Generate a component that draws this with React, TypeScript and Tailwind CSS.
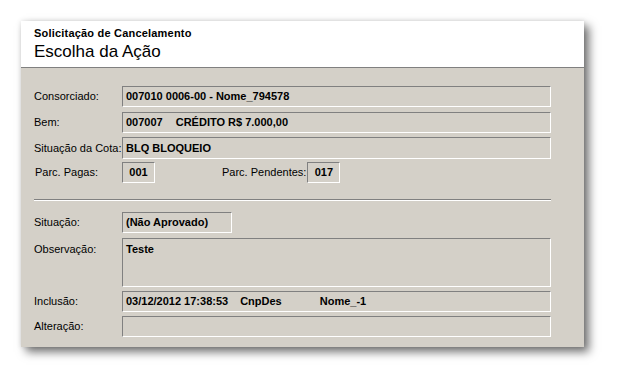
import React from "react";

const font = { fontFamily: "'Liberation Sans', Arial, sans-serif" };

function Field({ children, className = "" }: { children?: React.ReactNode; className?: string }) {
    return (
        <div className={`border-t border-l border-t-[#808080] border-l-[#808080] border-b border-r border-b-white border-r-white bg-[#d4d0c8] px-[3px] text-[11px] font-bold text-black whitespace-nowrap flex items-center ${className}`}>
            {children}
        </div>
    );
}

function Row({ label, children, className = "" }: { label: string; children: React.ReactNode; className?: string }) {
    return (
        <div className={`flex items-center ${className}`}>
            <span className="w-[88px] shrink-0 whitespace-nowrap text-[11px] text-black">{label}</span>
            {children}
        </div>
    );
}

export default function App() {
    return (
        <div className="min-h-[389px] bg-white pt-[21px] pl-[21px]" style={font}>
            <div className="w-[563px] h-[326px] flex flex-col shadow-[5px_5px_9px_rgba(0,0,0,0.55),0_0_5px_rgba(0,0,0,0.12)]">
                {/* header */}
                <div className="h-[47px] shrink-0 bg-white border-b border-[#808080] pl-[13px] pt-[5px]">
                    <div className="text-[11px] font-bold text-black leading-[14px] tracking-[0.2px]">Solicitação de Cancelamento</div>
                    <div className="text-[17px] text-black leading-[22px] mt-[1px]">Escolha da Ação</div>
                </div>

                {/* body */}
                <div className="flex-1 bg-[#d4d0c8] pl-[13px] pt-[18px]">
                    <Row label="Consorciado:">
                        <Field className="w-[429px] h-[21px]">007010 0006-00 - Nome_794578</Field>
                    </Row>
                    <Row label="Bem:" className="mt-[5px]">
                        <Field className="w-[429px] h-[21px]">
                            <span>007007</span>
                            <span className="ml-[13px]">CRÉDITO R$ 7.000,00</span>
                        </Field>
                    </Row>
                    <Row label="Situação da Cota:" className="mt-[4px]">
                        <Field className="w-[429px] h-[22px]">BLQ BLOQUEIO</Field>
                    </Row>
                    <div className="flex items-center mt-[3px]">
                        <span className="w-[88px] shrink-0 text-[11px] text-black pl-[1px]">Parc. Pagas:</span>
                        <Field className="w-[33px] h-[21px] justify-center">001</Field>
                        <span className="ml-[67px] whitespace-nowrap text-[11px] text-black">Parc. Pendentes:</span>
                        <Field className="ml-[1px] w-[33px] h-[21px] justify-center">017</Field>
                    </div>

                    <div className="mt-[16px] w-[517px] border-t border-[#808080] border-b border-b-white" />

                    <Row label="Situação:" className="mt-[11px]">
                        <Field className="w-[110px] h-[21px]">(Não Aprovado)</Field>
                    </Row>
                    <div className="flex mt-[5px]">
                        <span className="w-[88px] shrink-0 text-[11px] text-black pt-[3px]">Observação:</span>
                        <Field className="w-[429px] h-[49px] !items-start pt-[2px]">Teste</Field>
                    </div>
                    <Row label="Inclusão:" className="mt-[4px]">
                        <Field className="w-[429px] h-[21px]">
                            <span>03/12/2012 17:38:53</span>
                            <span className="ml-[12px]">CnpDes</span>
                            <span className="ml-[38px]">Nome_-1</span>
                        </Field>
                    </Row>
                    <Row label="Alteração:" className="mt-[4px]">
                        <Field className="w-[429px] h-[21px]" />
                    </Row>
                </div>
            </div>
        </div>
    );
}
